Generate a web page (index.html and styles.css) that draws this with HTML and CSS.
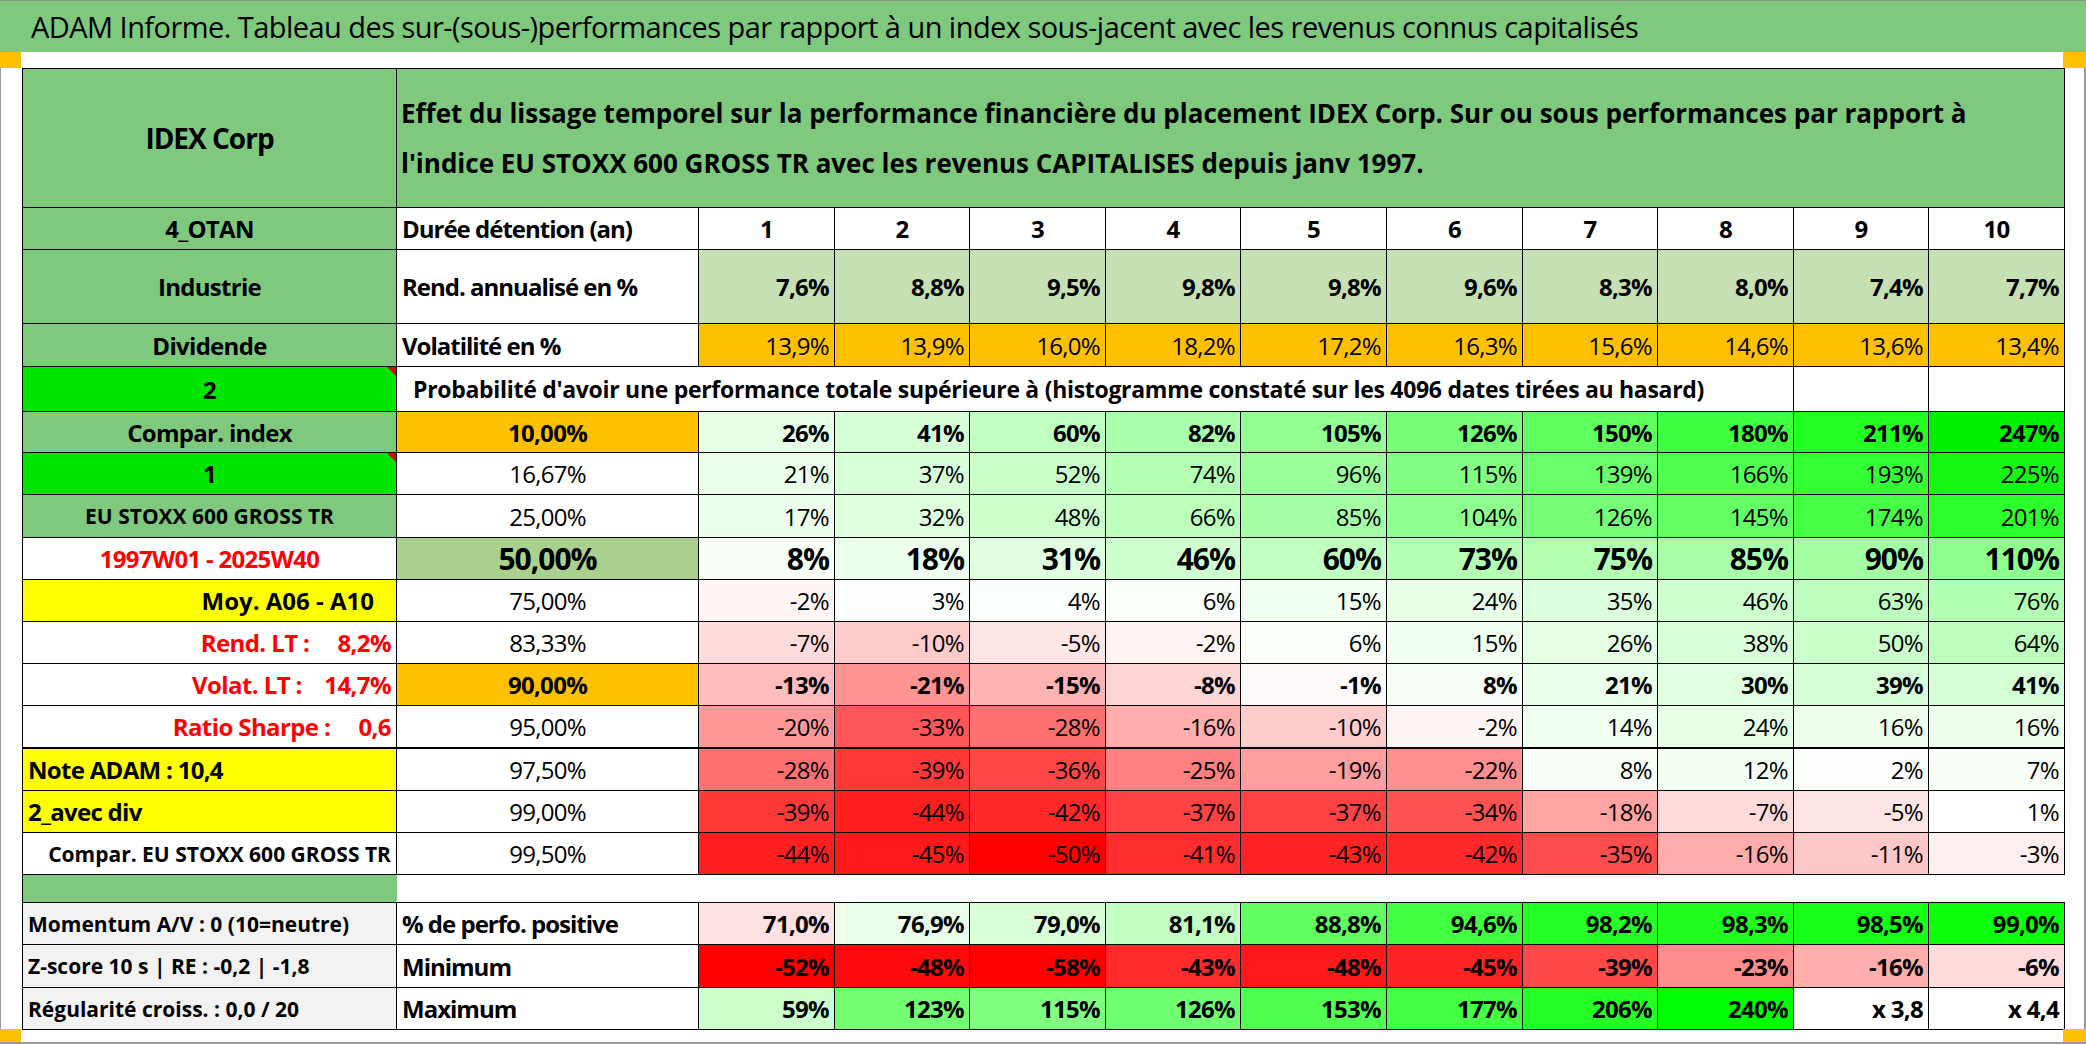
FILE: index.html
```html
<!DOCTYPE html>
<html lang="fr">
<head>
<meta charset="utf-8">
<title>ADAM Informe – IDEX Corp</title>
<link rel="stylesheet" href="styles.css">
</head>
<body>
<div class="page">
  <div class="title">ADAM Informe. Tableau des sur-(sous-)performances par rapport à un index sous-jacent avec les revenus connus capitalisés</div>
  <div class="sheet">
    <div class="grid">
      <!-- header -->
      <div class="c g b ctr big">IDEX Corp</div>
      <div class="c g b head span11">Effet du lissage temporel sur la performance financière du placement IDEX Corp. Sur ou sous performances par rapport à<br>l'indice EU STOXX 600 GROSS TR avec les revenus CAPITALISES depuis janv 1997.</div>

      <!-- Durée -->
      <div class="c g b ctr">4_OTAN</div>
      <div class="c b lft lbl">Durée détention (an)</div>
      <div class="c b ctr">1</div><div class="c b ctr">2</div><div class="c b ctr">3</div><div class="c b ctr">4</div><div class="c b ctr">5</div><div class="c b ctr">6</div><div class="c b ctr">7</div><div class="c b ctr">8</div><div class="c b ctr">9</div><div class="c b ctr">10</div>

      <!-- Rend -->
      <div class="c g b ctr">Industrie</div>
      <div class="c b lft lbl">Rend. annualisé en %</div>
      <div class="c lg b rgt">7,6%</div><div class="c lg b rgt">8,8%</div><div class="c lg b rgt">9,5%</div><div class="c lg b rgt">9,8%</div><div class="c lg b rgt">9,8%</div><div class="c lg b rgt">9,6%</div><div class="c lg b rgt">8,3%</div><div class="c lg b rgt">8,0%</div><div class="c lg b rgt">7,4%</div><div class="c lg b rgt">7,7%</div>

      <!-- Vol -->
      <div class="c g b ctr">Dividende</div>
      <div class="c b lft lbl">Volatilité en %</div>
      <div class="c or rgt">13,9%</div><div class="c or rgt">13,9%</div><div class="c or rgt">16,0%</div><div class="c or rgt">18,2%</div><div class="c or rgt">17,2%</div><div class="c or rgt">16,3%</div><div class="c or rgt">15,6%</div><div class="c or rgt">14,6%</div><div class="c or rgt">13,6%</div><div class="c or rgt">13,4%</div>

      <!-- Proba -->
      <div class="c bg b ctr note">2</div>
      <div class="c b lft proba span9">Probabilité d'avoir une performance totale supérieure à (histogramme constaté sur les 4096 dates tirées au hasard)</div>
      <div class="c"></div><div class="c"></div>

      <!-- Compar. index -->
      <div class="c g b ctr">Compar. index</div>
      <div class="c or b ctr">10,00%</div>
      <div class="c b rgt" style="background:rgb(228,255,228)">26%</div><div class="c b rgt" style="background:rgb(213,255,213)">41%</div><div class="c b rgt" style="background:rgb(193,255,193)">60%</div><div class="c b rgt" style="background:rgb(170,255,170)">82%</div><div class="c b rgt" style="background:rgb(145,255,145)">105%</div><div class="c b rgt" style="background:rgb(118,255,118)">126%</div><div class="c b rgt" style="background:rgb(96,255,96)">150%</div><div class="c b rgt" style="background:rgb(64,255,64)">180%</div><div class="c b rgt" style="background:rgb(34,255,34)">211%</div><div class="c b rgt" style="background:rgb(0,240,0)">247%</div>

      <!-- 1 -->
      <div class="c bg b ctr note">1</div>
      <div class="c ctr">16,67%</div>
      <div class="c rgt" style="background:rgb(233,255,233)">21%</div><div class="c rgt" style="background:rgb(217,255,217)">37%</div><div class="c rgt" style="background:rgb(201,255,201)">52%</div><div class="c rgt" style="background:rgb(179,255,179)">74%</div><div class="c rgt" style="background:rgb(154,255,154)">96%</div><div class="c rgt" style="background:rgb(130,255,130)">115%</div><div class="c rgt" style="background:rgb(106,255,106)">139%</div><div class="c rgt" style="background:rgb(80,255,80)">166%</div><div class="c rgt" style="background:rgb(52,255,52)">193%</div><div class="c rgt" style="background:rgb(20,248,20)">225%</div>

      <!-- EU STOXX -->
      <div class="c g b ctr small">EU STOXX 600 GROSS TR</div>
      <div class="c ctr">25,00%</div>
      <div class="c rgt" style="background:rgb(237,255,237)">17%</div><div class="c rgt" style="background:rgb(222,255,222)">32%</div><div class="c rgt" style="background:rgb(205,255,205)">48%</div><div class="c rgt" style="background:rgb(187,255,187)">66%</div><div class="c rgt" style="background:rgb(165,255,165)">85%</div><div class="c rgt" style="background:rgb(142,255,142)">104%</div><div class="c rgt" style="background:rgb(118,255,118)">126%</div><div class="c rgt" style="background:rgb(100,255,100)">145%</div><div class="c rgt" style="background:rgb(70,255,70)">174%</div><div class="c rgt" style="background:rgb(44,255,44)">201%</div>

      <!-- 1997 -->
      <div class="c b ctr red">1997W01 - 2025W40</div>
      <div class="c mg b ctr xl">50,00%</div>
      <div class="c b rgt xl" style="background:rgb(247,255,247)">8%</div><div class="c b rgt xl" style="background:rgb(236,255,236)">18%</div><div class="c b rgt xl" style="background:rgb(223,255,223)">31%</div><div class="c b rgt xl" style="background:rgb(207,255,207)">46%</div><div class="c b rgt xl" style="background:rgb(193,255,193)">60%</div><div class="c b rgt xl" style="background:rgb(180,255,180)">73%</div><div class="c b rgt xl" style="background:rgb(178,255,178)">75%</div><div class="c b rgt xl" style="background:rgb(167,255,167)">85%</div><div class="c b rgt xl" style="background:rgb(162,255,162)">90%</div><div class="c b rgt xl" style="background:rgb(141,255,141)">110%</div>

      <!-- Moy -->
      <div class="c ye b rgt moy">Moy. A06 - A10</div>
      <div class="c ctr">75,00%</div>
      <div class="c rgt" style="background:rgb(255,245,245)">-2%</div><div class="c rgt" style="background:rgb(252,255,252)">3%</div><div class="c rgt" style="background:rgb(251,255,251)">4%</div><div class="c rgt" style="background:rgb(249,255,249)">6%</div><div class="c rgt" style="background:rgb(240,255,240)">15%</div><div class="c rgt" style="background:rgb(230,255,230)">24%</div><div class="c rgt" style="background:rgb(219,255,219)">35%</div><div class="c rgt" style="background:rgb(207,255,207)">46%</div><div class="c rgt" style="background:rgb(190,255,190)">63%</div><div class="c rgt" style="background:rgb(177,255,177)">76%</div>

      <!-- Rend LT -->
      <div class="c b rgt red pre rl">Rend. LT :     8,2%</div>
      <div class="c ctr">83,33%</div>
      <div class="c rgt" style="background:rgb(255,219,219)">-7%</div><div class="c rgt" style="background:rgb(255,204,204)">-10%</div><div class="c rgt" style="background:rgb(255,230,230)">-5%</div><div class="c rgt" style="background:rgb(255,245,245)">-2%</div><div class="c rgt" style="background:rgb(249,255,249)">6%</div><div class="c rgt" style="background:rgb(240,255,240)">15%</div><div class="c rgt" style="background:rgb(228,255,228)">26%</div><div class="c rgt" style="background:rgb(216,255,216)">38%</div><div class="c rgt" style="background:rgb(203,255,203)">50%</div><div class="c rgt" style="background:rgb(189,255,189)">64%</div>

      <!-- Volat LT -->
      <div class="c b rgt red pre rl">Volat. LT :    14,7%</div>
      <div class="c or b ctr">90,00%</div>
      <div class="c b rgt" style="background:rgb(255,189,189)">-13%</div><div class="c b rgt" style="background:rgb(255,148,148)">-21%</div><div class="c b rgt" style="background:rgb(255,179,179)">-15%</div><div class="c b rgt" style="background:rgb(255,214,214)">-8%</div><div class="c b rgt" style="background:rgb(255,250,250)">-1%</div><div class="c b rgt" style="background:rgb(247,255,247)">8%</div><div class="c b rgt" style="background:rgb(233,255,233)">21%</div><div class="c b rgt" style="background:rgb(224,255,224)">30%</div><div class="c b rgt" style="background:rgb(215,255,215)">39%</div><div class="c b rgt" style="background:rgb(213,255,213)">41%</div>

      <!-- Ratio Sharpe -->
      <div class="c b rgt red pre rl thick">Ratio Sharpe :     0,6</div>
      <div class="c ctr thick">95,00%</div>
      <div class="c rgt thick" style="background:rgb(255,153,153)">-20%</div><div class="c rgt thick" style="background:rgb(255,87,87)">-33%</div><div class="c rgt thick" style="background:rgb(255,112,112)">-28%</div><div class="c rgt thick" style="background:rgb(255,173,173)">-16%</div><div class="c rgt thick" style="background:rgb(255,204,204)">-10%</div><div class="c rgt thick" style="background:rgb(255,245,245)">-2%</div><div class="c rgt thick" style="background:rgb(241,255,241)">14%</div><div class="c rgt thick" style="background:rgb(230,255,230)">24%</div><div class="c rgt thick" style="background:rgb(238,255,238)">16%</div><div class="c rgt thick" style="background:rgb(238,255,238)">16%</div>

      <!-- Note ADAM -->
      <div class="c ye b lft">Note ADAM : 10,4</div>
      <div class="c ctr">97,50%</div>
      <div class="c rgt" style="background:rgb(255,112,112)">-28%</div><div class="c rgt" style="background:rgb(255,56,56)">-39%</div><div class="c rgt" style="background:rgb(255,71,71)">-36%</div><div class="c rgt" style="background:rgb(255,128,128)">-25%</div><div class="c rgt" style="background:rgb(255,158,158)">-19%</div><div class="c rgt" style="background:rgb(255,143,143)">-22%</div><div class="c rgt" style="background:rgb(247,255,247)">8%</div><div class="c rgt" style="background:rgb(243,255,243)">12%</div><div class="c rgt" style="background:rgb(253,255,253)">2%</div><div class="c rgt" style="background:rgb(248,255,248)">7%</div>

      <!-- 2_avec div -->
      <div class="c ye b lft">2_avec div</div>
      <div class="c ctr">99,00%</div>
      <div class="c rgt" style="background:rgb(255,56,56)">-39%</div><div class="c rgt" style="background:rgb(255,31,31)">-44%</div><div class="c rgt" style="background:rgb(255,41,41)">-42%</div><div class="c rgt" style="background:rgb(255,66,66)">-37%</div><div class="c rgt" style="background:rgb(255,66,66)">-37%</div><div class="c rgt" style="background:rgb(255,82,82)">-34%</div><div class="c rgt" style="background:rgb(255,163,163)">-18%</div><div class="c rgt" style="background:rgb(255,219,219)">-7%</div><div class="c rgt" style="background:rgb(255,230,230)">-5%</div><div class="c rgt" style="background:rgb(254,255,254)">1%</div>

      <!-- Compar EU -->
      <div class="c b rgt small">Compar. EU STOXX 600 GROSS TR</div>
      <div class="c ctr">99,50%</div>
      <div class="c rgt" style="background:rgb(255,31,31)">-44%</div><div class="c rgt" style="background:rgb(255,26,26)">-45%</div><div class="c rgt" style="background:rgb(255,0,0)">-50%</div><div class="c rgt" style="background:rgb(255,46,46)">-41%</div><div class="c rgt" style="background:rgb(255,36,36)">-43%</div><div class="c rgt" style="background:rgb(255,41,41)">-42%</div><div class="c rgt" style="background:rgb(255,77,77)">-35%</div><div class="c rgt" style="background:rgb(255,173,173)">-16%</div><div class="c rgt" style="background:rgb(255,199,199)">-11%</div><div class="c rgt" style="background:rgb(255,240,240)">-3%</div>

      <!-- spacer -->
      <div class="c g noright"></div>
      <div class="c span11 noright"></div>

      <!-- Momentum -->
      <div class="c gr b lft small">Momentum A/V : 0 (10=neutre)</div>
      <div class="c b lft lbl">% de perfo. positive</div>
      <div class="c b rgt" style="background:#ffe1e1">71,0%</div><div class="c b rgt" style="background:#eaffea">76,9%</div><div class="c b rgt" style="background:#d9ffd9">79,0%</div><div class="c b rgt" style="background:#c4ffc4">81,1%</div><div class="c b rgt" style="background:#62ff62">88,8%</div><div class="c b rgt" style="background:#42ff42">94,6%</div><div class="c b rgt" style="background:#26ff26">98,2%</div><div class="c b rgt" style="background:#20ff20">98,3%</div><div class="c b rgt" style="background:#18ff18">98,5%</div><div class="c b rgt" style="background:#0cff0c">99,0%</div>

      <!-- Minimum -->
      <div class="c gr b lft small">Z-score 10 s | RE : -0,2 | -1,8</div>
      <div class="c b lft lbl">Minimum</div>
      <div class="c b rgt" style="background:#ff0000">-52%</div><div class="c b rgt" style="background:#ff0a0a">-48%</div><div class="c b rgt" style="background:#ff0000">-58%</div><div class="c b rgt" style="background:#ff2a2a">-43%</div><div class="c b rgt" style="background:#ff1a1a">-48%</div><div class="c b rgt" style="background:#ff2424">-45%</div><div class="c b rgt" style="background:#ff4848">-39%</div><div class="c b rgt" style="background:#ff8c8c">-23%</div><div class="c b rgt" style="background:#ffaeae">-16%</div><div class="c b rgt" style="background:#ffdcdc">-6%</div>

      <!-- Maximum -->
      <div class="c gr b lft small">Régularité croiss. : 0,0 / 20</div>
      <div class="c b lft lbl">Maximum</div>
      <div class="c b rgt" style="background:#ccffcc">59%</div><div class="c b rgt" style="background:#72ff72">123%</div><div class="c b rgt" style="background:#80ff80">115%</div><div class="c b rgt" style="background:#70ff70">126%</div><div class="c b rgt" style="background:#50ff50">153%</div><div class="c b rgt" style="background:#44ff44">177%</div><div class="c b rgt" style="background:#26ff26">206%</div><div class="c b rgt" style="background:#00ff00">240%</div><div class="c b rgt">x 3,8</div><div class="c b rgt">x 4,4</div>
    </div>
  </div>
  <span class="mark m-tl"></span>
  <span class="mark m-tr"></span>
  <span class="mark m-bl"></span>
  <span class="mark m-br"></span>
</div>
</body>
</html>
```
FILE: styles.css
```css
* { box-sizing: border-box; }
html, body { margin: 0; padding: 0; background: #fff; }
body { font-family: "Open Sans", "Liberation Sans", sans-serif; color: #000; }

.page {
  position: relative;
  width: 2086px;
  height: 1044px;
  overflow: hidden;
  background: #fff;
}

.title {
  height: 52px;
  line-height: 52px;
  background: #7fc97f;
  border-top: 1px solid #8a9a8a;
  padding-left: 31px;
  font-size: 29px;
  letter-spacing: -0.55px;
  white-space: nowrap;
}

.sheet {
  height: 992px;
  padding: 16px 0 0 21px;
  border-left: 1px solid #9a9a9a;
  border-right: 2px solid #9a9a9a;
  border-bottom: 2px solid #9a9a9a;
}

.grid {
  display: grid;
  width: 2043px;
  grid-template-columns: 374px 302px 136px 135px 136px 135px 146px 136px 135px 136px 135px 136px;
  grid-template-rows: 139px 42px 74px 43px 45px 41px 42px 43px 42px 42px 42px 42px 43px 42px 42px 42px 28px 42px 43px 42px;
  border-left: 1px solid #000;
  border-top: 1px solid #000;
}

.c {
  display: flex;
  align-items: center;
  padding: 0 5px;
  border-right: 1px solid #000;
  border-bottom: 1px solid #000;
  font-size: 24px;
  letter-spacing: -0.7px;
  white-space: nowrap;
  position: relative;
  min-width: 0;
}

.b { font-weight: 700; }
.ctr { justify-content: center; }
.rgt { justify-content: flex-end; }
.lft { justify-content: flex-start; }
.pre { white-space: pre; }

.g  { background: #7fc97f; }
.lg { background: #c6e0b4; }
.or { background: #ffc000; }
.bg { background: #00e600; }
.ye { background: #ffff00; }
.mg { background: #a9d08e; }
.gr { background: #f2f2f2; }

.red { color: #f00; }

.lbl { letter-spacing: -1px; }
.rl { letter-spacing: -0.6px; }
.big { font-size: 28px; letter-spacing: -1px; }
.xl { font-size: 30px; letter-spacing: -1px; }
.small { font-size: 21px; letter-spacing: 0; }
.moy { padding-right: 22px; letter-spacing: 0; }

.head {
  font-size: 26px;
  letter-spacing: 0;
  line-height: 50px;
  display: block;
  padding: 19px 4px 0 4px;
}
.proba { font-size: 23px; letter-spacing: -0.3px; padding-left: 16px; }

.span11 { grid-column: span 11; }
.span9 { grid-column: span 9; }
.noright { border-right: 0; }
.thick { border-bottom: 2px solid #000; }

.note::after {
  content: "";
  position: absolute;
  top: 0;
  right: 0;
  border-style: solid;
  border-width: 0 9px 9px 0;
  border-color: transparent #e00000 transparent transparent;
}

.mark {
  position: absolute;
  background: #ffc000;
}
.m-tl { left: 0; top: 52px; width: 21px; height: 16px; }
.m-tr { right: 0; top: 52px; width: 23px; height: 16px; }
.m-bl { left: 0; top: 1029px; width: 21px; height: 13px; }
.m-br { right: 0; top: 1029px; width: 23px; height: 13px; }
```
